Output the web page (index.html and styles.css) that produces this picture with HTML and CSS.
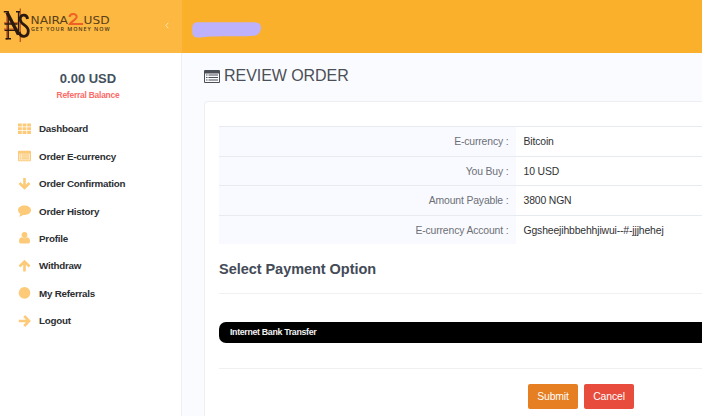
FILE: index.html
```
<!DOCTYPE html>
<html lang="en">
<head>
    <meta charset="UTF-8">
    <title>Review Order</title>
    <link rel="stylesheet" href="styles.css">
</head>
<body>

<header class="topbar">
    <div class="brand">
        <svg class="logo" width="112" height="40" viewBox="0 0 112 40">
            <g fill="none" stroke="#c2561f" stroke-width="1.300">
                <path d="M3.900 8v26M17.300 2.500v33.500M1 16.800h14M1 23.200h14"/>
            </g>
            <g fill="none" stroke="#2b1a12">
                <path d="M4 6.500 15.500 28.500" stroke-width="3.400"/>
                <path d="M.800 5.800h5M5.200 6v26.500M2.500 32.800h5.500M1.500 18h13M1.500 24.400h13M15.600 6v23M13 5.800h4" stroke-width="1.400"/>
                <path d="M24.600 13c-.8-5.500-7.600-5-7.400.5.3 5.500 8.300 5.500 8.100 11.500-.2 6.500-7.500 7.300-9.300 1" stroke-width="2.800"/>
            </g>
            <g class="logo-name">
                <text x="27.500" y="18.400" font-size="9.600" textLength="37.500" lengthAdjust="spacingAndGlyphs">NAIRA</text>
                <text x="80.500" y="18.400" font-size="9.600" textLength="26" lengthAdjust="spacingAndGlyphs">USD</text>
            </g>
            <path d="M66.600 11c.2-3.900 7.200-4 7.100.1-.1 2.500-4.900 3.800-6.900 6.900H80" fill="none" stroke="#ee6125" stroke-width="2"/>
            <text class="logo-tag" x="28" y="24.900" font-size="5.400" textLength="78.500">GET YOUR MONEY NOW</text>
        </svg>
        <svg class="toggle" width="4" height="7" viewBox="0 0 4 7"><path d="M3.300.7.800 3.500l2.500 2.800"/></svg>
    </div>
    <div class="user"><svg width="70" height="17" viewBox="0 0 70 17"><path d="M5 .3h56c6 0 8.500 2 8 6-.6 5-3.500 7.500-9 7.700C46 14.500 20 13.900 8 15.400c-5 .4-7.500-1-7.700-5C0 5.500-.2.500 5 .3z" fill="#beb1fb"/></svg></div>
</header>

<div class="page">
    <aside class="sidebar">
        <div class="balance">0.00 USD</div>
        <div class="balance-label">Referral Balance</div>
        <ul class="menu">
            <li><svg viewBox="0 0 13 12"><path d="M0 .5h3.800v3H0zM4.600.5h3.800v3H4.600zM9.200.5H13v3H9.200zM0 4.300h3.800v3H0zM4.600 4.300h3.800v3H4.600zM9.200 4.300H13v3H9.200zM0 8.100h3.800v3H0zM4.600 8.100h3.800v3H4.600zM9.200 8.100H13v3H9.200z"/></svg><span>Dashboard</span></li>
            <li><svg viewBox="0 0 13 12"><path fill-rule="evenodd" d="M1 .8h11q1 0 1 1v8.400q0 1-1 1H1q-1 0-1-1V1.800q0-1 1-1zM1 3.700v6.500h11V3.700z"/><path d="M2 4.600h1v1H2zM4 4.600h7v1H4zM2 6.400h1v1H2zM4 6.400h7v1H4zM2 8.200h1v1H2zM4 8.200h7v1H4z"/><path class="tint" d="M1 3.700h11v6.500H1z"/></svg><span>Order E-currency</span></li>
            <li><svg viewBox="0 0 13 12"><path class="line" d="M6.500 0v9.500M1.500 5l5 4.900 5-4.900"/></svg><span>Order Confirmation</span></li>
            <li><svg viewBox="0 0 13 12"><path d="M6.500.6C10.200.6 13 2.700 13 5.300S10.200 10 6.500 10q-.8 0-1.500-.1-1.800 1.500-4 1.600 1.200-1.200 1.300-2.500Q0 7.600 0 5.300C0 2.700 2.800.6 6.500.6z"/></svg><span>Order History</span></li>
            <li><svg viewBox="0 0 13 12"><circle cx="6.500" cy="3" r="2.900"/><path d="M3.700 5.200q2.800 2.200 5.600 0 2.700.6 2.700 4.200 0 2-1.800 2H2.800q-1.800 0-1.800-2 0-3.600 2.700-4.200z"/></svg><span>Profile</span></li>
            <li><svg viewBox="0 0 13 12"><path class="line" d="M6.500 11.500V2M1.500 6.500l5-4.900 5 4.900"/></svg><span>Withdraw</span></li>
            <li><svg viewBox="0 0 13 12"><circle cx="6.500" cy="5.900" r="5.800"/></svg><span>My Referrals</span></li>
            <li><svg viewBox="0 0 13 12"><path class="line" d="M.8 6h10M6.200 1 11.100 6l-4.900 5"/></svg><span>Logout</span></li>
        </ul>
    </aside>

    <main class="content">
        <h1 class="title">
            <svg width="16" height="13" viewBox="0 0 16 13"><path fill-rule="evenodd" d="M1 0h14q1 0 1 1v11q0 1-1 1H1q-1 0-1-1V1q0-1 1-1zM1 3.500V12h14V3.500z"/><path d="M2 4.600h1.500v1H2zM4.500 4.600H14v1H4.500zM2 7.100h1.500v1H2zM4.500 7.100H14v1H4.500zM2 9.600h1.500v1H2zM4.500 9.600H14v1H4.500z"/></svg>
            <span>REVIEW ORDER</span>
        </h1>

        <section class="panel">
            <dl class="details">
                <dt>E-currency :</dt><dd>Bitcoin</dd>
                <dt>You Buy :</dt><dd>10 USD</dd>
                <dt>Amount Payable :</dt><dd>3800 NGN</dd>
                <dt>E-currency Account :</dt><dd>Ggsheejihbbehhjiwui--#-jjjhehej</dd>
            </dl>
            <h2 class="subtitle">Select Payment Option</h2>
            <div class="option">Internet Bank Transfer</div>
            <div class="actions">
                <button class="btn submit">Submit</button>
                <button class="btn cancel">Cancel</button>
            </div>
        </section>
    </main>
</div>

</body>
</html>
```
FILE: styles.css
```
* {
    box-sizing: border-box;
}

body {
    margin: 0;
    height: 416px;
    overflow: hidden;
    font-family: "Liberation Sans", Arial, sans-serif;
    background: #fff;
}

.topbar {
    display: flex;
    height: 53px;
    background: #fab02a;
}

.brand {
    display: flex;
    justify-content: space-between;
    width: 182px;
    padding: 6px 13px 0 3px;
    background: #fcb840;
}

.logo-name {
    fill: #59401c;
    font-family: "DejaVu Sans", sans-serif;
}

.logo-tag {
    fill: #49361a;
    font-family: "Open Sans", sans-serif;
    font-weight: 600;
}

.toggle {
    margin-top: 16px;
    fill: none;
    stroke: #fee3a8;
}

.user {
    padding: 22px 0 0 9.5px;
}

.page {
    display: flex;
    height: 363px;
}

.sidebar {
    flex: none;
    width: 182px;
    border-right: 1px solid #eeeff5;
}

.balance {
    margin-top: 18px;
    padding-right: 5px;
    text-align: center;
    font-size: 13px;
    line-height: 16px;
    font-weight: bold;
    color: #43515e;
}

.balance-label {
    margin-top: 3px;
    padding-right: 5px;
    text-align: center;
    font-size: 8.4px;
    line-height: 10px;
    font-weight: bold;
    letter-spacing: -0.2px;
    color: #fb6b68;
}

.menu {
    margin: 15px 0 0;
    padding: 0 0 0 18px;
    list-style: none;
}

.menu li {
    display: flex;
    align-items: center;
    gap: 8px;
    height: 27.45px;
    font-size: 9.8px;
    font-weight: bold;
    letter-spacing: -0.23px;
    color: #2c2e31;
}

.menu svg {
    width: 13px;
    height: 12px;
    fill: #fcca78;
}

.menu .line {
    fill: none;
    stroke: #fcca78;
    stroke-width: 2.6;
}

.menu .tint {
    opacity: 0.45;
}

.content {
    flex: 1;
    min-width: 0;
    padding-left: 22px;
    background: #fafbfe;
}

.title {
    display: flex;
    align-items: center;
    gap: 4px;
    height: 20px;
    margin: 13px 0 15px;
    font-size: 16px;
    font-weight: normal;
    letter-spacing: -0.05px;
    color: #4b4f57;
}

.title svg {
    fill: #4b4f57;
}

.panel {
    height: 330px;
    padding: 24px 0 0 14px;
    border: 1px solid #eceef3;
    border-right: 0;
    border-radius: 4px 0 0 0;
    background: #fff;
}

.details {
    display: grid;
    grid-template-columns: 297px 1fr;
    margin: 0;
    font-size: 10.4px;
    letter-spacing: -0.14px;
}

.details dt,
.details dd {
    height: 29.5px;
    margin: 0;
    padding: 0 7.5px;
    border-top: 1px solid #e7ebef;
    line-height: 29px;
}

.details dt {
    text-align: right;
    color: #6c6f76;
    background: #f9faff;
}

.details dd {
    color: #2f3134;
}

.subtitle {
    margin: 0;
    height: 50px;
    padding-top: 15px;
    border-bottom: 1px solid #eef0f2;
    font-size: 14.5px;
    line-height: 20px;
    letter-spacing: -0.04px;
    color: #434b57;
}

.option {
    height: 21px;
    margin: 28px 0 25px;
    padding-left: 11px;
    border-radius: 7px 0 0 7px;
    font-size: 8.8px;
    line-height: 21px;
    font-weight: bold;
    letter-spacing: -0.32px;
    color: #f2f2f2;
    background: #000;
}

.actions {
    display: flex;
    gap: 6px;
    padding: 15px 0 0 309px;
    border-top: 1px solid #eef0f2;
}

.btn {
    width: 50px;
    height: 25px;
    padding: 0;
    border: 0;
    border-radius: 2px;
    font-family: inherit;
    font-size: 10.4px;
    letter-spacing: -0.1px;
    color: #fff;
}

.submit {
    background: #e67e22;
}

.cancel {
    background: #e74c3c;
}
```
